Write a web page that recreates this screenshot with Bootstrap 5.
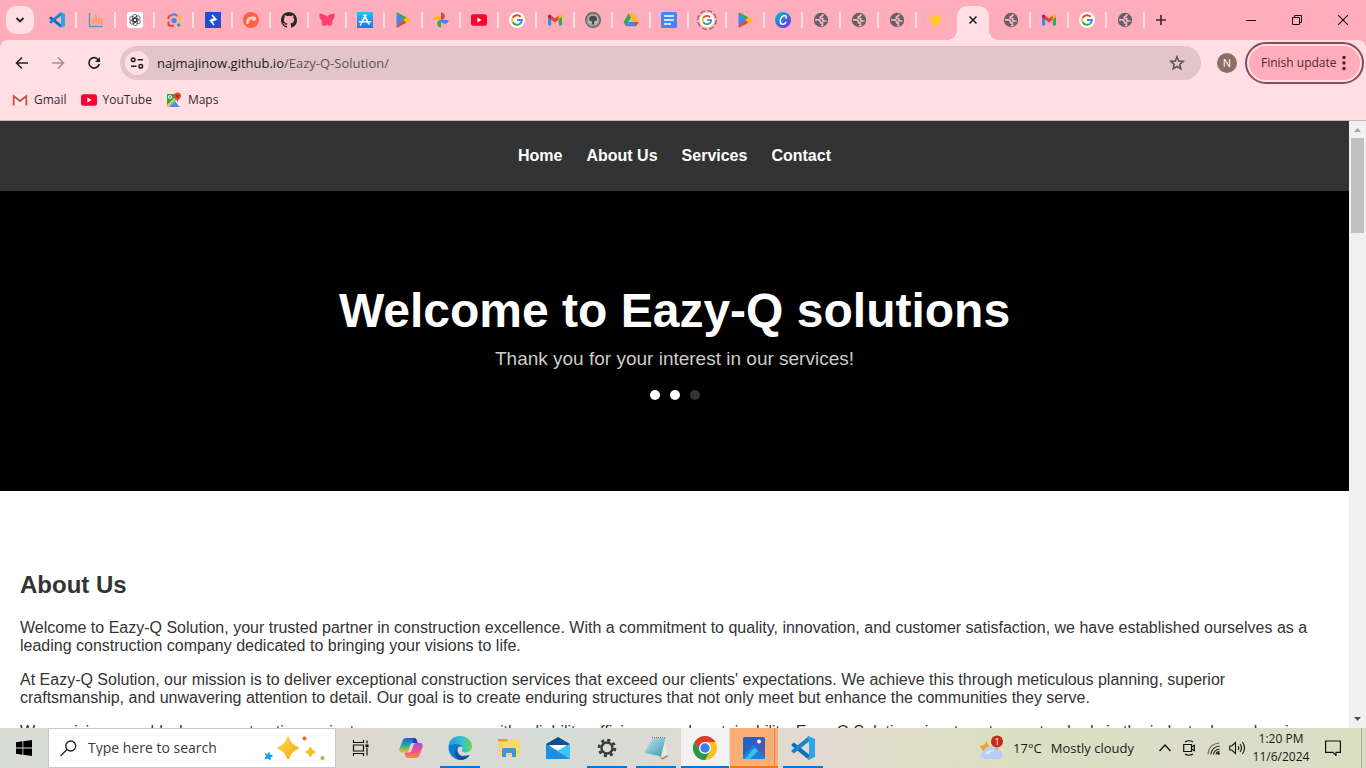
<!DOCTYPE html>
<html lang="en">
<head>
<meta charset="utf-8">
<meta name="viewport" content="width=device-width, initial-scale=1">
<title>Eazy-Q Solution</title>
<link href="https://cdn.jsdelivr.net/npm/bootstrap@5.3.0/dist/css/bootstrap.min.css" rel="stylesheet">
<style>
  body { font-family: "Open Sans", "Noto Sans", sans-serif; font-size: 12px; line-height: 16px; color: #2b2b2b; }
  button { border: 0; background: none; padding: 0; color: inherit; }
  svg { display: block; flex: none; }

  /* Tab strip */
  .tab-strip { height: 40px; background: #ffadba; }
  .tab-search { width: 28px; height: 28px; margin: 0 4px 0 6px; border-radius: 10px; background: #ffdfe4; }
  .tab-item { width: 38px; height: 16px; flex: none; border-right: 2px solid #ffdfe4; }
  .tab-item.wide { width: 39px; }
  .tab-item.bare { border-color: transparent; }
  .tab-live { width: 32px; height: 34px; margin: 0 4px 0 2px; padding-bottom: 6px; background: #ffdfe4; border-radius: 10px 10px 0 0; position: relative; flex: none; }
  .tab-live::before, .tab-live::after { content: ""; position: absolute; bottom: 0; width: 10px; height: 10px; }
  .tab-live::before { right: 100%; background: radial-gradient(circle at 0 0, transparent 10px, #ffdfe4 10px); }
  .tab-live::after { left: 100%; background: radial-gradient(circle at 100% 0, transparent 10px, #ffdfe4 10px); }
  .tab-new { width: 32px; height: 28px; }
  .win-btn { width: 46px; height: 40px; }

  /* Toolbar and bookmarks */
  .toolbar-wrap { background: #ffadba; }
  .toolbar { height: 46px; background: #ffdfe4; border-radius: 8px 8px 0 0; padding: 0 6px 0 4px; }
  .tool-btn { width: 36px; height: 34px; }
  .omnibox { height: 34px; margin-left: 8px; padding: 0 15px 0 5px; border-radius: 17px; background: #e1c5c9; }
  .site-info { width: 24px; height: 24px; border-radius: 50%; background: #ffdfe4; }
  .url-text { font-size: 13px; line-height: 18px; color: #5f5155; margin-left: 8px; }
  .url-text b { font-weight: 400; color: #1f1b1c; }
  .avatar { width: 20px; height: 20px; margin: 0 12px 0 16px; border-radius: 50%; background: #8c6e63; color: #fff; font-size: 11px; }
  .update-btn { height: 34px; width: 111px; padding: 0 11px 0 12px; border-radius: 17px; background: #ffadba; outline: 2px solid #8f485b; outline-offset: 2px; color: #4b2a33; }
  .bookmarks { height: 35px; background: #ffdfe4; border-bottom: 1px solid #cfb3b9; padding: 0 12px 6px; gap: 14px; }
  .bookmarks a { color: #33292c; text-decoration: none; gap: 6px; }

  /* Site */
  .site { font-family: "Liberation Sans", Arial, sans-serif; font-size: 16px; line-height: 18px; color: #333; background: #fff; }
  .site-nav { height: 70px; background: #333; gap: 24px; }
  .site-nav a { color: #fff; font-weight: 700; text-decoration: none; }
  .hero { height: 300px; background: #000; }
  .hero h1 { font-size: 48px; line-height: 56px; font-weight: 700; color: #fff; margin: 0 0 9px; }
  .hero p { font-size: 19px; line-height: 22px; color: #ccc; margin: 0 0 20px; }
  .dots { gap: 10px; }
  .dot { width: 10px; height: 10px; border-radius: 50%; background: #fff; }
  .dot.dim { background: #333; }
  .about { padding: 80px 20px 0; }
  .about h2 { font-size: 24px; line-height: 28px; font-weight: 700; margin: 0 0 20px; }
  .about p { margin: 0 0 16px; }
  .scroll-rail { width: 17px; background: #f1f1f1; padding: 7px 0 6px; flex: none; }
  .scroll-thumb { width: 13px; height: 95px; background: #c1c1c1; margin-top: 5px; }

  /* Taskbar */
  .taskbar { height: 40px; font-size: 14px; color: #1a1a1a; background: linear-gradient(90deg, #d9dcd5 0, #d9dcd5 5%, #e0d9cf 25%, #dad9d3 31%, #d5dcd6 40%, #dbdbd5 48%, #e3dacf 60%, #dcdfc2 73%, #d9dfc4 82%, #dbdcca 87%, #d9dec0 100%); }
  .start-btn { width: 48px; height: 40px; }
  .search-box { width: 288px; height: 40px; background: #fff; border: 1px solid #c8c8c8; padding: 0 9px 0 11px; }
  .search-box input { border: 0; outline: 0; background: none; padding: 0; margin-left: 11px; width: 170px; color: #3a3a3a; font-size: 14px; }
  .search-box input::placeholder { color: #3a3a3a; opacity: 1; }
  .task-list { margin-left: 3px; gap: 1px; }
  .task-btn { width: 48px; height: 40px; }
  .task-btn.open { background: linear-gradient(#0078d7, #0078d7) center bottom / 40px 2px no-repeat; }
  .task-btn.front { background: linear-gradient(#0078d7, #0078d7) center bottom / 48px 2px no-repeat #f3f2f0; }
  .task-btn.alert-on { background: linear-gradient(#ff7300, #ff7300) center bottom / 48px 2px no-repeat, linear-gradient(90deg, transparent 44px, #d98b55 44px, #d98b55 45px, transparent 45px), #f8ae75; }
  .weather { gap: 9px; margin-right: 19px; font-size: 13px; }
  .tray-btn { width: 24px; height: 40px; }
  .clock { width: 64px; font-size: 12px; line-height: 18px; }
  .notice-btn { width: 40px; height: 40px; }
  .peek { width: 5px; height: 40px; margin-left: 8px; border-left: 1px solid #a9ab96; }
</style>
</head>
<body>
<svg width="0" height="0" class="position-absolute" aria-hidden="true">
  <defs>
    <symbol id="i-vscode" viewBox="0 0 24 24"><path fill="#0a6fb8" d="M.5 8.500 3 6.500l15 12v5.500L.5 9.800z"/><path fill="#1587d1" d="M.5 15.500 3 17.500 18 5.500V0L.5 14.200z"/><path fill="#29a5ec" d="m17.500 0 6.500 3v18l-6.500 3-1.500-1.500 2-2V3.500l-2-2z"/></symbol>
    <symbol id="i-bars" viewBox="0 0 16 16"><path d="M1.500 1v13.500H15" fill="none" stroke="#45a6c4" stroke-width="1.500"/><path d="M5 12V7m3 5V3m3 9V5m3 7V7" stroke="#ff9a3d" stroke-width="1.500"/></symbol>
    <symbol id="i-gpt" viewBox="0 0 16 16"><rect width="16" height="16" rx="2" fill="#fff"/><g fill="none" stroke="#333" stroke-width=".7"><rect x="5.600" y="2.300" width="4.200" height="7.400" rx="2.100"/><rect x="5.600" y="2.300" width="4.200" height="7.400" rx="2.100" transform="rotate(60 8 8)"/><rect x="5.600" y="2.300" width="4.200" height="7.400" rx="2.100" transform="rotate(120 8 8)"/><rect x="5.600" y="2.300" width="4.200" height="7.400" rx="2.100" transform="rotate(180 8 8)"/><rect x="5.600" y="2.300" width="4.200" height="7.400" rx="2.100" transform="rotate(240 8 8)"/><rect x="5.600" y="2.300" width="4.200" height="7.400" rx="2.100" transform="rotate(300 8 8)"/></g></symbol>
    <symbol id="i-lens" viewBox="0 0 16 16"><g fill="none" stroke-width="2"><path d="M2.500 7V5.500a2 2 0 0 1 2-2" stroke="#ea4335"/><path d="M4.500 3.500h1L6.500 2.500h3l1 1H12" stroke="#4285f4"/><path d="M11.500 3.500a2.300 2.300 0 0 1 2.300 2.300V8.500" stroke="#fbbc04"/><path d="M2.500 9.500v2.300a2 2 0 0 0 2 2H8" stroke="#ea4335"/></g><circle cx="8" cy="8.600" r="2.700" fill="#4285f4"/><circle cx="12.700" cy="12.900" r="1.700" fill="#34a853"/></symbol>
    <symbol id="i-toptal" viewBox="0 0 16 16"><path fill="#204ecf" d="M0 0h16v16H0z"/><path d="M7 3l4 4.500L6.800 9M9.300 6.500 5.500 8.500 9 13" fill="none" stroke="#fff" stroke-width="1.500"/></symbol>
    <symbol id="i-coral" viewBox="0 0 16 16"><circle cx="8" cy="8" r="8" fill="#ff6044"/><path d="M3.500 12C2.500 7.500 5 4.500 10 4.500c2 0 3.500 1 3.300 2.200-.3 1.800-2 2.300-3.800 2.300.3-1.500-.8-2-2-1.500C6.500 8 5.500 10 5.500 12z" fill="#ffd3c8"/></symbol>
    <symbol id="i-github" viewBox="0 0 16 16"><path fill="#24292f" d="M8 0C3.580 0 0 3.580 0 8c0 3.540 2.290 6.530 5.470 7.590.4.070.55-.17.55-.38 0-.19-.01-.82-.01-1.490-2.010.37-2.530-.49-2.690-.94-.09-.23-.48-.94-.82-1.130-.28-.15-.68-.52-.01-.53.63-.01 1.080.58 1.230.82.72 1.210 1.870.87 2.330.66.070-.52.28-.87.51-1.070-1.780-.2-3.640-.89-3.640-3.950 0-.87.31-1.590.82-2.150-.08-.2-.36-1.020.08-2.120 0 0 .67-.21 2.200.82a7.400 7.400 0 0 1 4 0c1.530-1.040 2.200-.82 2.200-.82.44 1.100.16 1.920.08 2.120.51.56.82 1.270.82 2.150 0 3.070-1.870 3.750-3.650 3.950.29.25.54.73.54 1.480 0 1.070-.01 1.930-.01 2.200 0 .21.15.46.55.38A8.010 8.010 0 0 0 16 8c0-4.420-3.580-8-8-8z"/></symbol>
    <symbol id="i-fly" viewBox="0 0 16 16"><path fill="#ff3f6c" d="M8 4.800C6 2.500 3 1.500.500 1.500 0 4.500.8 7.500 3 8.800c-1 2.500 0 5.200 2 5.200 1.500 0 2.500-1 3-2 .5 1 1.500 2 3 2 2 0 3-2.700 2-5.200 2.200-1.300 3-4.300 2.500-7.300C13 1.500 10 2.500 8 4.800z"/></symbol>
    <symbol id="i-appstore" viewBox="0 0 16 16"><defs><linearGradient id="g-as" x2="0" y2="1"><stop stop-color="#1fc2fb"/><stop offset="1" stop-color="#1b76f0"/></linearGradient></defs><path fill="url(#g-as)" d="M0 0h16v16H0z"/><path d="M7 3l5 9M9 3 4.500 10.500M2.500 9.800h7m2 0h2M4 12l-.5 1" stroke="#fff" stroke-width="1.600" stroke-linecap="round"/></symbol>
    <symbol id="i-play" viewBox="0 0 16 16"><path fill="#4285f4" d="M1.500 1v14l7-7z"/><path fill="#34a853" d="M1.500 1.500Q1.500 0 3.500 1l8 4.500L8.500 8z"/><path fill="#ea4335" d="M1.500 14.500Q1.500 16 3.500 15l8-4.500L8.500 8z"/><path fill="#fbbc04" d="m11.500 5.200 3.700 2.300q.8.500 0 1l-3.700 2.300-3-2.800z"/></symbol>
    <symbol id="i-photos" viewBox="0 0 16 16"><path fill="#ea4335" d="M8 .5a3.700 3.700 0 0 1 0 7.500z"/><path fill="#fbbc04" d="M.5 8A3.700 3.700 0 0 1 8 8z"/><path fill="#34a853" d="M8 15.500A3.700 3.700 0 0 1 8 8z"/><path fill="#4285f4" d="M15.500 8A3.700 3.700 0 0 1 8 8z"/></symbol>
    <symbol id="i-yt" viewBox="0 0 16 16"><rect y="2.300" width="16" height="11.400" rx="2.500" fill="#f03"/><path fill="#fff" d="M6.300 5.500v5L10.700 8z"/></symbol>
    <symbol id="i-google" viewBox="0 0 16 16"><circle cx="8" cy="8" r="8" fill="#fff"/><g fill="none" stroke-width="2"><path d="M3.700 5.800A4.900 4.900 0 0 1 11.600 4.700" stroke="#ea4335"/><path d="M3.700 10.300a4.900 4.900 0 0 1 0-4.600" stroke="#fbbc04"/><path d="M11.500 11.400A4.900 4.900 0 0 1 3.700 10.300" stroke="#34a853"/><path d="M8 8h4.900a4.900 4.900 0 0 1-1.500 3.500" stroke="#4285f4"/></g></symbol>
    <symbol id="i-gmail" viewBox="0 0 16 16"><path fill="#4285f4" d="M1 4h3.200v9.500H2a1 1 0 0 1-1-1z"/><path fill="#34a853" d="M11.800 4H15v8.500a1 1 0 0 1-1 1h-2.200z"/><path fill="#ea4335" d="M4.200 3.500 8 6.500l3.800-3v4L8 10.500l-3.800-3z"/><path fill="#c5221f" d="M1 4.200Q1.200 1.800 3.500 3l.7.500v4L1 5z"/><path fill="#fbbc04" d="M15 4.200Q14.800 1.800 12.500 3l-.7.500v4L15 5z"/></symbol>
    <symbol id="i-tree" viewBox="0 0 16 16"><circle cx="8" cy="8" r="7.300" fill="#999" stroke="#666" stroke-width="1.400"/><circle cx="8" cy="8" r="5.300" fill="#b5b5b5"/><path fill="#4c4c4c" d="M8 3.800c2.500 0 4.300 1.500 4 3.800-.2 1.600-1.600 1.800-3 1.500l.3 3.400H6.700L7 9.100c-1.400.3-2.800.100-3-1.500-.3-2.300 1.500-3.800 4-3.800z"/></symbol>
    <symbol id="i-drive" viewBox="0 0 16 16"><path fill="#fbbc04" d="M5.600 1.500h4.800L15.500 10h-4.800z"/><path fill="#34a853" d="M5.600 1.500 8 5.600 3 14.200.500 10z"/><path fill="#4285f4" d="M5.400 10h10.100L13 14.200H3z"/><path fill="#ea4335" d="M10.700 10h4.800L13 14.200z"/></symbol>
    <symbol id="i-docs" viewBox="0 0 16 16"><rect width="16" height="16" rx="1.500" fill="#4285f4"/><path d="M3 4h10M3 8h10M3 12h7" stroke="#fff" stroke-width="1.700"/></symbol>
    <symbol id="i-canva" viewBox="0 0 16 16"><defs><linearGradient id="g-cv" x2=".8" y2="1"><stop stop-color="#00c4cc"/><stop offset=".5" stop-color="#2b7be0"/><stop offset="1" stop-color="#7d2ae8"/></linearGradient></defs><circle cx="8" cy="8" r="8" fill="url(#g-cv)"/><path d="M11 6c.5-1.500 0-2.500-1.500-2.500C7 3.500 5.300 6.500 5.300 9.200c0 1.900 1 3.100 2.600 3.100 1.400 0 2.400-.9 3-2" fill="none" stroke="#fff" stroke-width="1.500" stroke-linecap="round"/></symbol>
    <symbol id="i-globe" viewBox="0 0 16 16"><circle cx="8" cy="8" r="7.200" fill="#5f6368"/><g fill="none" stroke="#ffadba" stroke-width="1.700" stroke-linejoin="round"><path d="M9.800 2.300v1.200L7.300 5v1.500h2.500V9h3.700"/><path d="M2 7.800h4l1.500 1.500v1.500h2v2.500L8 14"/></g></symbol>
    <symbol id="i-spark" viewBox="0 0 16 16"><path fill="#ffcf00" d="M8.800.5 9.800 5.500 15 3l-3 4 3 .5-2.500 1.500L14 12l-4-2-2.500 5.500L5 15l1.500-4.500L3.800 9 4.500 7.500.5 4l5.500 1.500 1 .5z"/></symbol>
  </defs>
</svg>

<div class="vh-100 d-flex flex-column overflow-hidden">
  <header>
    <div class="tab-strip d-flex align-items-center overflow-hidden">
      <button class="tab-search d-flex align-items-center justify-content-center flex-shrink-0" aria-label="Search tabs"><svg width="10" height="10" viewBox="0 0 10 10"><path d="m1.500 3 3.500 3.500L8.500 3" fill="none" stroke="#222" stroke-width="1.800"/></svg></button>
      <div class="tab-item wide d-flex align-items-center justify-content-center"><svg width="16" height="16"><use href="#i-vscode"/></svg></div>
      <div class="tab-item wide d-flex align-items-center justify-content-center"><svg width="16" height="16"><use href="#i-bars"/></svg></div>
      <div class="tab-item wide d-flex align-items-center justify-content-center"><svg width="16" height="16"><use href="#i-gpt"/></svg></div>
      <div class="tab-item wide d-flex align-items-center justify-content-center"><svg width="16" height="16"><use href="#i-lens"/></svg></div>
      <div class="tab-item wide d-flex align-items-center justify-content-center"><svg width="16" height="16"><use href="#i-toptal"/></svg></div>
      <div class="tab-item d-flex align-items-center justify-content-center"><svg width="16" height="16"><use href="#i-coral"/></svg></div>
      <div class="tab-item d-flex align-items-center justify-content-center"><svg width="16" height="16"><use href="#i-github"/></svg></div>
      <div class="tab-item d-flex align-items-center justify-content-center"><svg width="16" height="16"><use href="#i-fly"/></svg></div>
      <div class="tab-item d-flex align-items-center justify-content-center"><svg width="16" height="16"><use href="#i-appstore"/></svg></div>
      <div class="tab-item d-flex align-items-center justify-content-center"><svg width="16" height="16"><use href="#i-play"/></svg></div>
      <div class="tab-item d-flex align-items-center justify-content-center"><svg width="16" height="16"><use href="#i-photos"/></svg></div>
      <div class="tab-item d-flex align-items-center justify-content-center"><svg width="16" height="16"><use href="#i-yt"/></svg></div>
      <div class="tab-item d-flex align-items-center justify-content-center"><svg width="16" height="16"><use href="#i-google"/></svg></div>
      <div class="tab-item d-flex align-items-center justify-content-center"><svg width="16" height="16"><use href="#i-gmail"/></svg></div>
      <div class="tab-item d-flex align-items-center justify-content-center"><svg width="16" height="16"><use href="#i-tree"/></svg></div>
      <div class="tab-item d-flex align-items-center justify-content-center"><svg width="16" height="16"><use href="#i-drive"/></svg></div>
      <div class="tab-item d-flex align-items-center justify-content-center"><svg width="16" height="16"><use href="#i-docs"/></svg></div>
      <div class="tab-item d-flex align-items-center justify-content-center"><svg width="20" height="20" viewBox="0 0 20 20"><circle cx="10" cy="10" r="9.300" fill="none" stroke="#94606c" stroke-width="1.300" stroke-dasharray="5 2.300"/><circle cx="10" cy="10" r="7.500" fill="#ffeef0"/><use href="#i-google" x="3" y="3" width="14" height="14"/></svg></div>
      <div class="tab-item d-flex align-items-center justify-content-center"><svg width="16" height="16"><use href="#i-play"/></svg></div>
      <div class="tab-item d-flex align-items-center justify-content-center"><svg width="16" height="16"><use href="#i-canva"/></svg></div>
      <div class="tab-item d-flex align-items-center justify-content-center"><svg width="16" height="16"><use href="#i-globe"/></svg></div>
      <div class="tab-item d-flex align-items-center justify-content-center"><svg width="16" height="16"><use href="#i-globe"/></svg></div>
      <div class="tab-item d-flex align-items-center justify-content-center"><svg width="16" height="16"><use href="#i-globe"/></svg></div>
      <div class="tab-item bare d-flex align-items-center justify-content-center"><svg width="16" height="16"><use href="#i-spark"/></svg></div>
      <div class="tab-live d-flex align-items-center justify-content-center align-self-end"><button aria-label="Close tab"><svg width="10" height="10" viewBox="0 0 10 10"><path d="m1.500 1.500 7 7m0-7-7 7" stroke="#222" stroke-width="1.600"/></svg></button></div>
      <div class="tab-item d-flex align-items-center justify-content-center"><svg width="16" height="16"><use href="#i-globe"/></svg></div>
      <div class="tab-item d-flex align-items-center justify-content-center"><svg width="16" height="16"><use href="#i-gmail"/></svg></div>
      <div class="tab-item d-flex align-items-center justify-content-center"><svg width="16" height="16"><use href="#i-google"/></svg></div>
      <div class="tab-item d-flex align-items-center justify-content-center"><svg width="16" height="16"><use href="#i-globe"/></svg></div>
      <button class="tab-new d-flex align-items-center justify-content-center flex-shrink-0" aria-label="New tab"><svg width="12" height="12" viewBox="0 0 12 12"><path d="M6 1v10M1 6h10" stroke="#3b2429" stroke-width="1.600"/></svg></button>
      <div class="d-flex ms-auto flex-shrink-0">
        <button class="win-btn d-flex align-items-center justify-content-center" aria-label="Minimize"><svg width="10" height="10" viewBox="0 0 10 10"><path d="M0 5.500h10" stroke="#111"/></svg></button>
        <button class="win-btn d-flex align-items-center justify-content-center" aria-label="Restore"><svg width="10" height="10" viewBox="0 0 10 10"><path d="M.5 2.500h7v7h-7zM2.500 2.500v-2h7v7h-2" fill="none" stroke="#111"/></svg></button>
        <button class="win-btn d-flex align-items-center justify-content-center" aria-label="Close"><svg width="10" height="10" viewBox="0 0 10 10"><path d="m0 0 10 10M10 0 0 10" stroke="#111" stroke-width="1.100"/></svg></button>
      </div>
    </div>
    <div class="toolbar-wrap">
      <div class="toolbar d-flex align-items-center">
        <button class="tool-btn d-flex align-items-center justify-content-center" aria-label="Back"><svg width="14" height="14" viewBox="0 0 14 14"><path d="M13 7H2m5-5.500L1.500 7 7 12.500" fill="none" stroke="#222" stroke-width="1.600"/></svg></button>
        <button class="tool-btn d-flex align-items-center justify-content-center" aria-label="Forward"><svg width="14" height="14" viewBox="0 0 14 14"><path d="M1 7h11M7 1.500 12.500 7 7 12.500" fill="none" stroke="#a68d92" stroke-width="1.600"/></svg></button>
        <button class="tool-btn d-flex align-items-center justify-content-center" aria-label="Reload"><svg width="14" height="14" viewBox="0 0 14 14"><path d="M11.300 3.700A5.200 5.200 0 1 0 12.200 8" fill="none" stroke="#222" stroke-width="1.700"/><path fill="#222" d="M13 1v5H8z"/></svg></button>
        <div class="omnibox d-flex align-items-center flex-grow-1">
          <button class="site-info d-flex align-items-center justify-content-center" aria-label="Site information"><svg width="14" height="12" viewBox="0 0 14 12"><g fill="none" stroke="#222" stroke-width="1.500"><circle cx="3.200" cy="2.800" r="1.800"/><path d="M7.500 2.800H13M1 9.200h5.500"/><circle cx="10.800" cy="9.200" r="1.800"/></g></svg></button>
          <span class="url-text"><b>najmajinow.github.io</b>/Eazy-Q-Solution/</span>
          <button class="ms-auto" aria-label="Bookmark this tab"><svg width="18" height="18" viewBox="0 0 18 18"><path d="m9 2.800 1.700 4.200 4.500.4-3.400 3 1 4.400L9 12.500l-3.800 2.300 1-4.400-3.400-3 4.500-.4z" fill="none" stroke="#5b5155" stroke-width="1.500"/></svg></button>
        </div>
        <button class="avatar d-flex align-items-center justify-content-center" aria-label="Profile">N</button>
        <button class="update-btn d-flex align-items-center justify-content-between text-nowrap">Finish update <svg width="12" height="16" viewBox="0 0 12 16"><g fill="#3b2429"><circle cx="7" cy="2.500" r="1.700"/><circle cx="7" cy="8" r="1.700"/><circle cx="7" cy="13.500" r="1.700"/></g></svg></button>
      </div>
    </div>
    <nav class="bookmarks d-flex align-items-center" aria-label="Bookmarks">
      <a href="#" class="d-flex align-items-center"><svg width="16" height="16" viewBox="0 0 16 16"><path fill="#f1eeee" d="M1 3h14v10.500H1z"/><path d="M1.700 13.500V4L8 9l6.300-5v9.500" fill="none" stroke="#d54b3d" stroke-width="1.800"/></svg>Gmail</a>
      <a href="#" class="d-flex align-items-center"><svg width="16" height="16"><use href="#i-yt"/></svg>YouTube</a>
      <a href="#" class="d-flex align-items-center"><svg width="16" height="16" viewBox="0 0 16 16"><path fill="#31a350" d="M1 2h9v6l-8 7H1z"/><path fill="#4b8df0" d="m3 15 6-6 5 6z"/><path fill="#e8e6e2" d="M9 8 13 9v5.500z"/><path d="m1 14.500 8-8" stroke="#fcd050" stroke-width="1.800"/><circle cx="4" cy="5" r="1.500" fill="none" stroke="#fff"/><path fill="#e04436" d="M11.500.500a3.500 3.500 0 0 1 3.500 3.500c0 2.500-3 3-3.500 6-.5-3-3.500-3.500-3.500-6A3.500 3.500 0 0 1 11.500.500z"/><circle cx="11.500" cy="4" r="1.200" fill="#8a2019"/></svg>Maps</a>
    </nav>
  </header>

  <div class="d-flex flex-grow-1 overflow-hidden">
    <div class="site flex-grow-1 overflow-hidden">
      <nav class="site-nav d-flex align-items-center justify-content-center">
        <a href="#">Home</a><a href="#about">About Us</a><a href="#services">Services</a><a href="#contact">Contact</a>
      </nav>
      <section class="hero d-flex flex-column align-items-center justify-content-center text-center">
        <h1>Welcome to Eazy-Q solutions</h1>
        <p>Thank you for your interest in our services!</p>
        <div class="dots d-flex"><span class="dot"></span><span class="dot"></span><span class="dot dim"></span></div>
      </section>
      <section class="about" id="about">
        <h2>About Us</h2>
        <p>Welcome to Eazy-Q Solution, your trusted partner in construction excellence. With a commitment to quality, innovation, and customer satisfaction, we have established ourselves as a leading construction company dedicated to bringing your visions to life.</p>
        <p>At Eazy-Q Solution, our mission is to deliver exceptional construction services that exceed our clients' expectations. We achieve this through meticulous planning, superior craftsmanship, and unwavering attention to detail. Our goal is to create enduring structures that not only meet but enhance the communities they serve.</p>
        <p>We envision a world where construction projects are synonymous with reliability, efficiency, and sustainability. Eazy-Q Solution aims to set new standards in the industry by embracing</p>
      </section>
    </div>
    <div class="scroll-rail d-flex flex-column align-items-center">
      <svg width="7" height="5" viewBox="0 0 7 5"><path fill="#a3a3a3" d="M3.500 0 7 4H0z"/></svg>
      <div class="scroll-thumb"></div>
      <svg class="mt-auto" width="7" height="5" viewBox="0 0 7 5"><path fill="#505050" d="M0 0h7L3.500 4z"/></svg>
    </div>
  </div>

  <footer class="taskbar d-flex align-items-center flex-shrink-0">
    <button class="start-btn d-flex align-items-center justify-content-center flex-shrink-0" aria-label="Start"><svg width="16" height="16" viewBox="0 0 16 16"><path d="M0 2.200 6.500 1.300v6.200H0zM7.300 1.200 16 0v7.500H7.300zM0 8.400h6.500v6.300L0 13.800zM7.300 8.400H16V16l-8.700-1.200z"/></svg></button>
    <label class="search-box d-flex align-items-center flex-shrink-0">
      <svg width="17" height="17" viewBox="0 0 17 17"><circle cx="10.700" cy="6" r="5" fill="none" stroke="#222" stroke-width="1.300"/><path d="m7 9.500-6.300 6.300" stroke="#222" stroke-width="1.400"/></svg>
      <input type="text" placeholder="Type here to search" aria-label="Search">
      <svg class="ms-auto" width="62" height="26" viewBox="0 0 62 26"><defs><linearGradient id="g-st" x2="1" y2="1"><stop stop-color="#ffdd55"/><stop offset="1" stop-color="#f2a60c"/></linearGradient></defs><path fill="url(#g-st)" stroke="url(#g-st)" stroke-width="2" stroke-linejoin="round" d="M24 2.500Q26.500 10.500 34 13q-7.500 2.500-10 10.500Q21.500 15.500 14 13q7.500-2.500 10-10.500z"/><path fill="#f9b923" stroke="#f9b923" stroke-linejoin="round" d="M46.500 12q1 4 5 5-4 1-5 5-1-4-5-5 4-1 5-5z"/><path fill="#12a4ea" stroke="#12a4ea" stroke-linejoin="round" d="m5 17.500 1 2.500 2.500.8-2.300 1.500L6 25l-2-2-3 .5 1.500-2.500L1.300 19l2.500.5z"/><circle cx="40.500" cy="3.500" r="2" fill="#f2642a"/><circle cx="58.500" cy="23" r="2" fill="#8cc83c"/></svg>
    </label>
    <button class="task-btn d-flex align-items-center justify-content-center" aria-label="Task view"><svg width="17" height="16" viewBox="0 0 17 16"><path d="M1.500 0v2.500h10V0M1.500 16v-2.500h10V16M1.500 5h10v6h-10zM15 .5v3M15 8v7.500" fill="none" stroke="#111" stroke-width="1.200"/><path d="M13.500 4.500h3v2.800h-3z"/></svg></button>
    <div class="task-list d-flex">
      <button class="task-btn d-flex align-items-center justify-content-center" aria-label="Copilot"><svg width="24" height="22" viewBox="0 0 24 22"><defs><linearGradient id="g-c1" x2="0" y2="1"><stop stop-color="#1b63dc"/><stop offset=".5" stop-color="#2aa6a5"/><stop offset="1" stop-color="#f3c41c"/></linearGradient><linearGradient id="g-c2" x2="0" y2="1"><stop stop-color="#a64be6"/><stop offset=".5" stop-color="#f0508b"/><stop offset="1" stop-color="#f98a3c"/></linearGradient></defs><path fill="url(#g-c1)" d="M7 1h8q2 0 2.700 2l1 3H14q-2 0-2.600 2L9.500 14Q9 15.500 7 15.500H3q-3.500 0-2.500-4L3.500 4Q4.500 1 7 1z"/><path fill="#2045b8" d="M13 1h2q2 0 2.700 2l1 3H14z"/><path fill="url(#g-c2)" d="M17 21H9q-2 0-2.700-2l-.8-3.500H10q2 0 2.600-2L14.500 8Q15 6 17 6h4q3.500 0 2.500 4l-3 8q-1 3-3.500 3z"/></svg></button>
      <button class="task-btn open d-flex align-items-center justify-content-center" aria-label="Edge"><svg width="24" height="24" viewBox="0 0 24 24"><defs><linearGradient id="g-e1"><stop stop-color="#1c9cdc"/><stop offset=".6" stop-color="#35c3c9"/><stop offset="1" stop-color="#66d84c"/></linearGradient></defs><path fill="#0f7ad3" d="M1 9Q3 5 9 6.500 14 8 14 11q-3-1.500-4 1-1.500 5 3.500 8l8-1q-4 5-9.500 5A12 12 0 0 1 1 9z"/><path fill="url(#g-e1)" d="M.5 10.500C1 4 6 0 12 0c7 0 12 4.500 12 10 0 4-3 6.500-6.500 6.500-3 0-4.500-1-3.500-2.500 1.500-2 0-5.500-5.500-6-3.500-.3-6 .5-8 2.500z"/><path fill="#134f98" d="M9 11c-2 5 2.500 10 8 9.500 2-.2 3.500-.8 5-1.800-2.500 4-6.500 5.300-10 5.300-5-1-7-8-3-13z"/></svg></button>
      <button class="task-btn d-flex align-items-center justify-content-center" aria-label="File Explorer"><svg width="22" height="20" viewBox="0 0 22 20"><path fill="#e3a21a" d="M0 1h9l1.500 2.500H0z"/><path fill="#ffd668" d="M0 4h10l1-2h11v16H0z"/><path fill="#3c97d8" d="M4 19v-7.500q0-1.500 1.500-1.500h11q1.500 0 1.500 1.500V19h-4v-4H8v4z"/></svg></button>
      <button class="task-btn d-flex align-items-center justify-content-center" aria-label="Mail"><svg width="24" height="22" viewBox="0 0 24 22"><path fill="#0f4e91" d="M0 7 12 0l12 7v4H0z"/><path fill="#fff" d="M3 8h18l-7 8h-4z"/><path fill="#1c90e0" d="m0 7 12 7L24 7v15H0z"/><path fill="#43c4f7" d="M24 7v15L11 14z"/></svg></button>
      <button class="task-btn open d-flex align-items-center justify-content-center" aria-label="Settings"><svg width="20" height="20" viewBox="0 0 20 20"><circle cx="10" cy="10" r="7.800" fill="none" stroke="#3c3c3c" stroke-width="3" stroke-dasharray="3.060 3.060"/><circle cx="10" cy="10" r="5.500" fill="none" stroke="#3c3c3c" stroke-width="2.400"/></svg></button>
      <button class="task-btn open d-flex align-items-center justify-content-center" aria-label="Notepad"><svg width="24" height="24" viewBox="0 0 24 24"><defs><linearGradient id="g-np" x2="1" y2="1"><stop stop-color="#c9e6ea"/><stop offset="1" stop-color="#2f9bb1"/></linearGradient></defs><path fill="#ece7da" d="m21 2 2.500 17-5 3L17 8z"/><path fill="#8d7549" d="m18.500 22 5-3v1.500l-5 3-3-2.500z"/><path fill="url(#g-np)" d="M8 2h13.500L17 20.500.5 17z"/><path stroke="#777" stroke-width="1.200" stroke-dasharray="1 1" d="M8 1.500h13"/></svg></button>
      <button class="task-btn front d-flex align-items-center justify-content-center" aria-label="Chrome"><svg width="24" height="24" viewBox="0 0 24 24"><circle cx="12" cy="12" r="12" fill="#fbc116"/><path fill="#dd3d30" d="M1.600 6A12 12 0 0 1 22.400 6H12L6.800 15z"/><path fill="#219b4a" d="M1.600 6 6.800 15Q9 18 13 17.800L12 24A12 12 0 0 1 1.600 6z"/><path fill="#219b4a" d="m17.200 15-5.200 9-3-7z"/><circle cx="12" cy="12" r="6" fill="#fff"/><circle cx="12" cy="12" r="4.700" fill="#3b7ded"/></svg></button>
      <button class="task-btn alert-on d-flex align-items-center justify-content-center" aria-label="Photos"><svg width="22" height="22" viewBox="0 0 22 22"><defs><linearGradient id="g-ph" x2="1" y2="1"><stop stop-color="#0b66c8"/><stop offset="1" stop-color="#6a53b5"/></linearGradient></defs><rect width="22" height="22" rx="2" fill="url(#g-ph)"/><circle cx="16" cy="4.500" r="2" fill="#fff"/><path fill="#1682dc" d="m0 19 9-10q1.500-1.500 3 0l10 10v1q0 2-2 2H2q-2 0-2-2z"/><path fill="#37c2f4" d="m2 22 8-10q1.500-1.500 3 0l2 2-8 8z"/></svg></button>
      <button class="task-btn open d-flex align-items-center justify-content-center" aria-label="Visual Studio Code"><svg width="24" height="24"><use href="#i-vscode"/></svg></button>
    </div>
    <div class="d-flex align-items-center ms-auto flex-shrink-0 text-nowrap">
      <div class="weather d-flex align-items-center">
        <svg width="26" height="26" viewBox="0 0 26 26"><path fill="#f6a51c" d="M10 2q-3 6 3 10 4 2 8 1-3 6-10 5-7-1-9-7Q9 10 10 2z"/><path fill="#b7cdf3" d="M6 24a5 5 0 0 1 0-9q2-4 6.500-4 4 0 6 4 6 0 6 5 0 4-4 4z"/><path fill="#dce8fb" d="M7 19q3-6 10-3-5 0-6 3z"/><circle cx="19" cy="6.500" r="6" fill="#c42b1c"/><text x="19" y="10" font-size="9" fill="#fff" text-anchor="middle">1</text></svg>
        <span>17°C</span><span>Mostly cloudy</span>
      </div>
      <button class="tray-btn d-flex align-items-center justify-content-center" aria-label="Show hidden icons"><svg width="12" height="8" viewBox="0 0 12 8"><path d="m.5 7 5.500-6 5.500 6" fill="none" stroke="#111" stroke-width="1.300"/></svg></button>
      <button class="tray-btn d-flex align-items-center justify-content-center" aria-label="Meet now"><svg width="12" height="16" viewBox="0 0 12 16"><path d="M2 2Q6-.5 10 2M2 14q4 2.500 8 0M.7 4.500h7.800v7H.7zM8.500 7l2.800-1.700v5.400L8.500 9z" fill="none" stroke="#111" stroke-width="1.200"/></svg></button>
      <button class="tray-btn d-flex align-items-center justify-content-center" aria-label="Network"><svg width="13" height="13" viewBox="0 0 13 13"><g fill="none" stroke="#222" stroke-width="1.100"><path d="M1 12.500Q1.500 2 12.500 1" opacity=".6"/><path d="M3.800 12.500Q4.500 5 12.500 4M6.500 12.500Q7 8 12.500 7M9 12.500q.5-3 3.500-3"/></g><circle cx="11.500" cy="11.500" r="1.200"/></svg></button>
      <button class="tray-btn d-flex align-items-center justify-content-center" aria-label="Volume"><svg width="17" height="14" viewBox="0 0 17 14"><path d="M.7 5h2L6.500 1.500v11L2.700 9h-2zM9 5q1.500 2 0 4m2-6q3 4 0 8m2.500-10q4 6 0 12" fill="none" stroke="#111" stroke-width="1.100"/></svg></button>
      <div class="clock text-center"><div>1:20 PM</div><div>11/6/2024</div></div>
      <button class="notice-btn d-flex align-items-center justify-content-center" aria-label="Notifications"><svg width="16" height="16" viewBox="0 0 16 16"><path d="M.6 1h14.800v11.400H11v3l-3-3H.6z" fill="none" stroke="#111" stroke-width="1.200"/></svg></button>
      <div class="peek"></div>
    </div>
  </footer>
</div>
<script src="https://cdn.jsdelivr.net/npm/bootstrap@5.3.0/dist/js/bootstrap.bundle.min.js"></script>
</body>
</html>
